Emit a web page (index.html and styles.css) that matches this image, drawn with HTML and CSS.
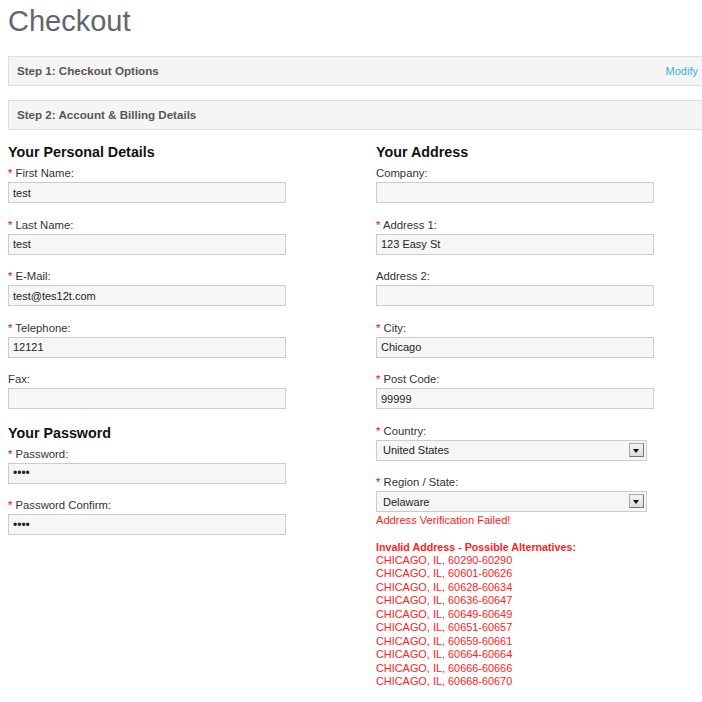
FILE: index.html
```html
<!DOCTYPE html>
<html>
<head>
    <title>Checkout</title>
    <link rel="stylesheet" href="styles.css">
</head>
<body>
    <div class="page">
        <h1>Checkout</h1>

        <div class="step">
            <span class="step-title">Step 1: Checkout Options</span>
            <a href="#" class="modify">Modify</a>
        </div>
        <div class="step">
            <span class="step-title">Step 2: Account &amp; Billing Details</span>
        </div>

        <div class="columns">
            <div class="col">
                <h2>Your Personal Details</h2>
                <div class="field">
                    <label><span class="req">*</span> First Name:</label>
                    <input type="text" value="test">
                </div>
                <div class="field">
                    <label><span class="req">*</span> Last Name:</label>
                    <input type="text" value="test">
                </div>
                <div class="field">
                    <label><span class="req">*</span> E-Mail:</label>
                    <input type="text" value="test@tes12t.com">
                </div>
                <div class="field">
                    <label><span class="req">*</span> Telephone:</label>
                    <input type="text" value="12121">
                </div>
                <div class="field">
                    <label>Fax:</label>
                    <input type="text" value="">
                </div>

                <h2>Your Password</h2>
                <div class="field">
                    <label><span class="req">*</span> Password:</label>
                    <input type="password" value="test">
                </div>
                <div class="field">
                    <label><span class="req">*</span> Password Confirm:</label>
                    <input type="password" value="test">
                </div>
            </div>

            <div class="col">
                <h2>Your Address</h2>
                <div class="field">
                    <label>Company:</label>
                    <input type="text" value="">
                </div>
                <div class="field">
                    <label><span class="req">*</span> Address 1:</label>
                    <input type="text" value="123 Easy St">
                </div>
                <div class="field">
                    <label>Address 2:</label>
                    <input type="text" value="">
                </div>
                <div class="field">
                    <label><span class="req">*</span> City:</label>
                    <input type="text" value="Chicago">
                </div>
                <div class="field">
                    <label><span class="req">*</span> Post Code:</label>
                    <input type="text" value="99999">
                </div>
                <div class="field">
                    <label><span class="req">*</span> Country:</label>
                    <div class="select-wrap">
                        <select>
                            <option>United States</option>
                        </select>
                        <span class="select-btn"></span>
                    </div>
                </div>
                <div class="field">
                    <label><span class="req">*</span> Region / State:</label>
                    <div class="select-wrap">
                        <select>
                            <option>Delaware</option>
                        </select>
                        <span class="select-btn"></span>
                    </div>
                    <div class="error">Address Verification Failed!</div>
                </div>

                <div class="alternatives">
                    <div class="alt-title">Invalid Address - Possible Alternatives:</div>
                    <div>CHICAGO, IL, 60290-60290</div>
                    <div>CHICAGO, IL, 60601-60626</div>
                    <div>CHICAGO, IL, 60628-60634</div>
                    <div>CHICAGO, IL, 60636-60647</div>
                    <div>CHICAGO, IL, 60649-60649</div>
                    <div>CHICAGO, IL, 60651-60657</div>
                    <div>CHICAGO, IL, 60659-60661</div>
                    <div>CHICAGO, IL, 60664-60664</div>
                    <div>CHICAGO, IL, 60666-60666</div>
                    <div>CHICAGO, IL, 60668-60670</div>
                </div>
            </div>
        </div>
    </div>
</body>
</html>
```

FILE: styles.css
```css
body {
    margin: 0 0 0 8px;
    font-family: "Liberation Sans", Arial, sans-serif;
    font-size: 11.3px;
    color: #333;
    background-color: #fff;
    overflow-x: hidden;
}

.page {
    width: 701px;
}

h1 {
    margin: 4px 0 18px 0;
    font-size: 29px;
    line-height: 34px;
    font-weight: normal;
    color: #5f6670;
}

.step {
    display: flex;
    justify-content: space-between;
    align-items: baseline;
    height: 14px;
    padding: 7px 10px 7px 8px;
    margin-bottom: 14px;
    background-color: #f5f5f5;
    border: 1px solid #ddd;
    line-height: 14px;
}

.step-title {
    font-size: 11.6px;
    font-weight: bold;
    color: #555;
}

.modify {
    font-size: 11px;
    color: #38b0e3;
    text-decoration: none;
}

.columns {
    display: grid;
    grid-template-columns: 368px 1fr;
    margin-top: -1px;
}

h2 {
    margin: 0 0 5px 0;
    font-size: 14.3px;
    line-height: 18px;
    color: #111;
}

.field {
    margin-bottom: 14.5px;
}

.field label {
    display: block;
    line-height: 14px;
    margin-bottom: 2px;
}

.req {
    color: #f00;
}

input {
    box-sizing: border-box;
    display: block;
    width: 278px;
    height: 21px;
    padding: 0 4px;
    margin: 0;
    font-family: "Liberation Sans", Arial, sans-serif;
    font-size: 11px;
    color: #222;
    background-color: #f6f6f6;
    border: 1px solid #ccc;
    border-radius: 0;
    outline: none;
}

input[type="password"] {
    font-size: 12px;
}

.select-wrap {
    position: relative;
    width: 271px;
}

select {
    box-sizing: border-box;
    display: block;
    width: 100%;
    height: 21px;
    padding: 0 6px;
    margin: 0;
    font-family: "Liberation Sans", Arial, sans-serif;
    font-size: 11px;
    color: #222;
    background-color: #f6f6f6;
    border: 1px solid #ccc;
    border-radius: 0;
    appearance: none;
    -webkit-appearance: none;
}

/* little dropdown button drawn over the right end of the select */
.select-btn {
    position: absolute;
    top: 3px;
    right: 3px;
    width: 15px;
    height: 14px;
    background: linear-gradient(#f4f4f4, #dcdcdc);
    border: 1px solid #a8a8a8;
    border-right-color: #777;
    border-bottom-color: #777;
    box-sizing: border-box;
}

.select-btn::after {
    content: "";
    position: absolute;
    left: 3px;
    top: 5px;
    border-left: 3.5px solid transparent;
    border-right: 3.5px solid transparent;
    border-top: 4px solid #111;
}

.error {
    margin-top: 1px;
    line-height: 14px;
    font-size: 11.1px;
    color: #f22;
}

.alternatives {
    margin-top: -1px;
    font-size: 10.9px;
    line-height: 13.45px;
    color: #f22;
}

.alt-title {
    font-size: 10.7px;
    font-weight: bold;
}
```
